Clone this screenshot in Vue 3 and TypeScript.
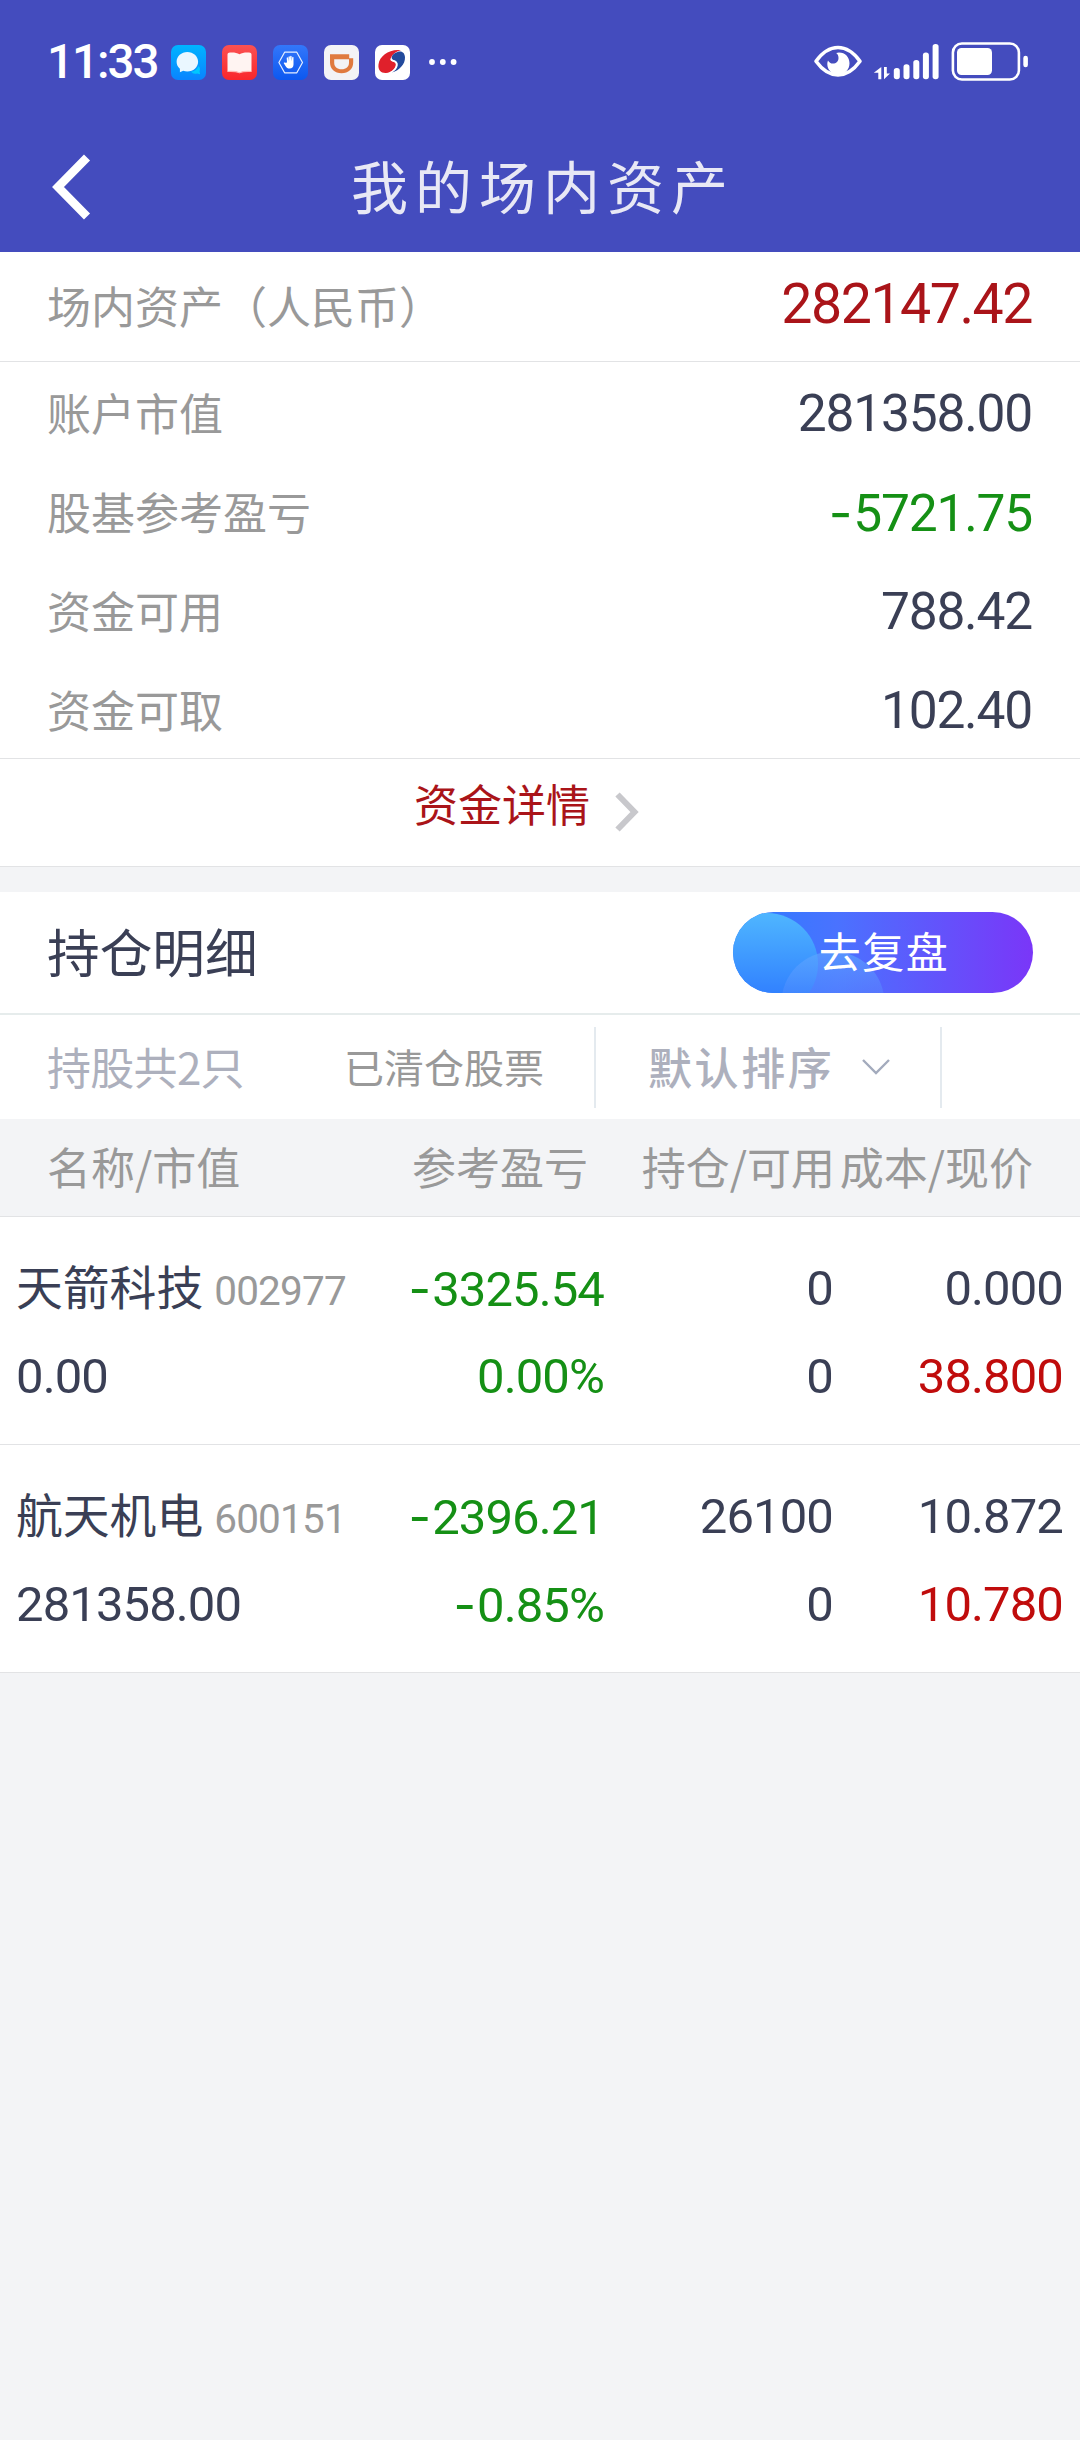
<script setup lang="ts">
interface SummaryRow {
  label: string
  sign?: string
  value: string
  tone?: string
}

interface Holding {
  name: string
  code: string
  marketValue: string
  sign: string
  profit: string
  rateSign: string
  rate: string
  position: string
  available: string
  cost: string
  price: string
}

const summary: SummaryRow[] = [
  { label: '账户市值', value: '281358.00' },
  { label: '股基参考盈亏', sign: '-', value: '5721.75', tone: 'green' },
  { label: '资金可用', value: '788.42' },
  { label: '资金可取', value: '102.40' },
]

const columns: string[] = ['名称/市值', '参考盈亏', '持仓/可用', '成本/现价']

const holdings: Holding[] = [
  {
    name: '天箭科技', code: '002977', marketValue: '0.00',
    sign: '-', profit: '3325.54', rateSign: '', rate: '0.00',
    position: '0', available: '0', cost: '0.000', price: '38.800',
  },
  {
    name: '航天机电', code: '600151', marketValue: '281358.00',
    sign: '-', profit: '2396.21', rateSign: '-', rate: '0.85',
    position: '26100', available: '0', cost: '10.872', price: '10.780',
  },
]
</script>

<template>
  <div class="page">
    <header class="top">
      <div class="status">
        <span class="time">11:33</span>
        <div class="apps">
          <svg width="35" height="35" viewBox="0 0 35 35">
            <defs>
              <linearGradient id="msgBg" x1="0" y1="0" x2="0" y2="1">
                <stop offset="0" stop-color="#00b4ff" /><stop offset="1" stop-color="#0a84ff" />
              </linearGradient>
            </defs>
            <rect width="35" height="35" rx="7" fill="url(#msgBg)" />
            <path d="M20 26.500c3.500 0 6-2 7.500-5.500 1.600 1.800 1.800 3.500 1 5.300l.6 2.900-3-.8c-2.300.8-4.600.2-6.100-1.900z" fill="#00c8ff" />
            <path d="M16.300 7C10.400 7 5.600 11.300 5.600 16.800c0 2.900 1.200 5.200 3.300 7v3.400l3.300-1.400c1.300.5 2.700.8 4.100.8 6 0 10.800-4.300 10.800-9.800S22.300 7 16.300 7z" fill="#eaf7ff" />
          </svg>
          <svg width="35" height="35" viewBox="0 0 35 35">
            <defs>
              <linearGradient id="bookBg" x1="0" y1="0" x2="0" y2="1">
                <stop offset="0" stop-color="#fb5152" /><stop offset="1" stop-color="#f9262b" />
              </linearGradient>
            </defs>
            <rect width="35" height="35" rx="7" fill="url(#bookBg)" />
            <path d="M5.500 9.500c0-1.300 1-2 2.500-2 3.500-.2 7 0 9.500 1.800C20 7.500 23.500 7.300 27 7.500c1.500 0 2.500.7 2.500 2V26.500c-4.500-.3-8.500-.2-12 1.200-3.500-1.400-7.500-1.500-12-1.200z" fill="#fff4f2" />
            <path d="M5.500 26.500c4.500-.3 8.500-.2 12 1.300 3.500-1.500 7.500-1.600 12-1.300" fill="none" stroke="#ffb9b4" stroke-width="1.200" />
          </svg>
          <svg width="35" height="35" viewBox="0 0 35 35">
            <defs>
              <linearGradient id="handBg" x1="0" y1="0" x2="0" y2="1">
                <stop offset="0" stop-color="#3377fa" /><stop offset="1" stop-color="#0c58f0" />
              </linearGradient>
            </defs>
            <rect width="35" height="35" rx="7" fill="url(#handBg)" />
            <path d="M11.600 7.200h12.200l5.700 10.300-5.700 10.300H11.600L5.900 17.500z" fill="none" stroke="#e6efff" stroke-width="1.200" stroke-linejoin="round" />
            <path d="M14 17.500l-.3-4.500c.1-.9 1.100-.9 1.300 0l.5 3.500V11.900c.1-.9 1.300-.9 1.400 0v4.300l.3-4.900c.1-.9 1.300-.9 1.400 0l.1 4.900.5-3.800c.1-.8 1.300-.8 1.300 0v7.100c0 2.500-1.500 4-3.800 4-2 0-3-.8-4.200-2.600l-1.700-2.600c-.3-.8.7-1.200 1.300-.6z" fill="#fff" />
          </svg>
          <svg width="35" height="35" viewBox="0 0 35 35">
            <rect width="35" height="35" rx="7" fill="#f3f3f6" />
            <path d="M6 9.200h19.200v4.100h4v4.200c0 6.500-4.800 10.700-11.600 10.700S6 24 6 17.500zM10.200 14.300v3.400c0 4 2.800 6.500 7.400 6.500s7.400-2.500 7.400-6.500v-3.400z" fill="#e07a3f" fill-rule="evenodd" />
          </svg>
          <svg width="35" height="35" viewBox="0 0 35 35">
            <rect width="35" height="35" rx="7" fill="#fff" />
            <path d="M26 5.200C15 3.500 4.500 10.500 3.500 19.500 2.800 25 6 28.300 11 28c5.500-.5 9.800-4 10-8 .1-2.200-1.300-3.300-3.500-3.700-1.700-.3-2.200-1.300-1.800-2.600C16.800 10 20.500 6.500 26 5.200z" fill="#e0202b" />
            <path d="M17 27.500C24.500 25.500 30.300 19 30 12.300 29.800 8 27 5.500 22.500 7c-3.600 1.200-5.500 3.300-5.800 5.400-.2 1.500.6 2.200 2 2.600 3 .8 4.400 2.700 4 5.400-.4 2.700-2.500 5.300-5.700 7.100z" fill="#234a9c" />
            <path d="M16.300 13.500c-.2 1.300.5 2.100 2 2.500 2.400.6 3.500 2 3.200 4-.4 3-2.700 5.700-6 7.500" fill="none" stroke="#fff" stroke-width="1.400" />
          </svg>
        </div>
        <svg class="dots" width="28" height="6" viewBox="0 0 28 6" fill="#fff">
          <circle cx="3" cy="3" r="2.900" /><circle cx="13.800" cy="3" r="2.900" /><circle cx="24.600" cy="3" r="2.900" />
        </svg>
        <svg class="sys" width="216" height="42" viewBox="813 40 216 42" fill="#fff">
          <path d="M816 60.300C823 50.500 829.500 46.500 838 46.500s15 4 22 13.800C853 70 846.500 74 838 74s-15-4-22-13.700z" fill="none" stroke="#fff" stroke-width="3.600" stroke-linejoin="round" />
          <path d="M839 51.500c6.200 0 10.500 4.600 10.500 10.700 0 6.200-4.600 11.300-11 11.300S827.300 69 827.300 63c0-1.300.2-2.500.7-3.600 1 2 2.800 3.200 4.900 3.200 3.300 0 5.600-2.500 5.600-5.600 0-2.100-.8-4-2.300-5z" />
          <path d="M881.300 66v12.200h-3V71.700h-4.500zM884 66v12.200l6-5.800h-3.200V66z" />
          <rect x="893.800" y="67" width="6" height="11.300" rx="2.800" />
          <rect x="903.500" y="63.300" width="6" height="15" rx="2.800" />
          <rect x="913.300" y="59" width="6" height="19.300" rx="2.800" />
          <rect x="922.900" y="51.600" width="6" height="26.700" rx="2.800" />
          <rect x="932.600" y="43" width="6" height="35.300" rx="2.800" />
          <rect x="952.900" y="42.500" width="66" height="36" rx="9" fill="none" stroke="#fff" stroke-width="2.600" />
          <rect x="957" y="47" width="35" height="27" rx="4.500" />
          <rect x="1023.300" y="54.700" width="4.600" height="11.600" rx="2.300" />
        </svg>
      </div>
      <div class="nav">
        <svg class="back" width="42" height="68" viewBox="0 0 42 68">
          <path d="M38 4.500L9 34l29 29.500" fill="none" stroke="#fff" stroke-width="8.500" />
        </svg>
        <h1>我的场内资产</h1>
      </div>
    </header>

    <section class="panel">
      <div class="total">
        <span class="label">场内资产（人民币）</span>
        <span class="num">282147.42</span>
      </div>
      <div class="rows">
        <div v-for="row in summary" :key="row.label" class="row">
          <span class="label">{{ row.label }}</span>
          <span class="num" :class="row.tone"><span v-if="row.sign" class="sign">{{ row.sign }}</span>{{ row.value }}</span>
        </div>
      </div>
      <div class="detail">
        <span>资金详情</span>
        <svg width="26" height="42" viewBox="0 0 26 42">
          <path d="M3.500 3.500L20.500 21 3.500 38.500" fill="none" stroke="#c8c8cc" stroke-width="6" />
        </svg>
      </div>
    </section>

    <section class="panel holdings">
      <div class="head">
        <h2>持仓明细</h2>
        <button class="review" type="button">
          <svg class="bubbles" width="300" height="81" viewBox="0 0 300 81">
            <defs>
              <linearGradient id="bubbleA" x1="0" y1="0" x2="0" y2="1">
                <stop offset="0" stop-color="#4fb6ff" /><stop offset="0.850" stop-color="#2f7dff" />
              </linearGradient>
              <linearGradient id="bubbleB" x1="0" y1="0" x2="0" y2="1">
                <stop offset="0" stop-color="#5fa8ff" stop-opacity="0.650" /><stop offset="0.500" stop-color="#5a8cff" stop-opacity="0.300" />
              </linearGradient>
            </defs>
            <circle cx="34" cy="52" r="51" fill="url(#bubbleA)" />
            <circle cx="100" cy="91" r="51.500" fill="url(#bubbleB)" />
          </svg>
          <span>去复盘</span>
        </button>
      </div>
      <div class="filters">
        <span class="count">持股共2只</span>
        <span class="cleared">已清仓股票</span>
        <div class="sort">
          <span>默认排序</span>
          <svg width="28" height="16" viewBox="0 0 28 16">
            <path d="M1 1l13 13L27 1" fill="none" stroke="#a3abbd" stroke-width="2.400" />
          </svg>
        </div>
      </div>
      <div class="thead">
        <span v-for="c in columns" :key="c">{{ c }}</span>
      </div>
      <div v-for="h in holdings" :key="h.code" class="stock">
        <div class="cell name"><b>{{ h.name }}</b><i>{{ h.code }}</i></div>
        <div class="cell green"><span class="sign">{{ h.sign }}</span>{{ h.profit }}</div>
        <div class="cell">{{ h.position }}</div>
        <div class="cell">{{ h.cost }}</div>
        <div class="cell">{{ h.marketValue }}</div>
        <div class="cell green"><span v-if="h.rateSign" class="sign">{{ h.rateSign }}</span>{{ h.rate }}%</div>
        <div class="cell">{{ h.available }}</div>
        <div class="cell red">{{ h.price }}</div>
      </div>
    </section>
  </div>
</template>

<style>
body {
  margin: 0;
  background: #f3f4f6;
}
</style>

<style scoped>
.page {
  width: 1080px;
  min-height: 2440px;
  background: #f3f4f6;
  color: #3a3f55;
  font-family: "Noto Sans CJK SC", sans-serif;
}

.top {
  height: 252px;
  background: #444cbe;
}

.status {
  display: flex;
  align-items: center;
  box-sizing: border-box;
  height: 124px;
  padding-left: 47px;
}

.time {
  width: 124px;
  color: #fff;
  font: 500 47.500px/60px Roboto, sans-serif;
  letter-spacing: -2px;
}

.apps {
  display: flex;
  gap: 16px;
}

.dots {
  margin-left: 19px;
}

.sys {
  margin: 0 51px 0 auto;
}

.nav {
  display: flex;
  align-items: center;
  box-sizing: border-box;
  height: 128px;
  padding: 0 0 3px 49px;
}

h1 {
  margin: 0 0 6px 260px;
  color: #e8e8f5;
  font-size: 57px;
  font-weight: 400;
  line-height: 80px;
  letter-spacing: 7px;
}

.panel {
  background: #fff;
}

.total,
.row {
  display: flex;
  align-items: center;
  justify-content: space-between;
  box-sizing: border-box;
  padding: 0 48px 0 47px;
}

.total {
  height: 110px;
  padding-bottom: 4px;
  border-bottom: 1px solid #e2e3e5;
}

.row {
  height: 99px;
}

.rows {
  border-bottom: 1px solid #e2e3e5;
}

.label {
  color: #999;
  font-size: 44px;
  line-height: 60px;
}

.num {
  font: 400 51.500px/60px Roboto, sans-serif;
  letter-spacing: -1.200px;
}

.row .num {
  padding-top: 4px;
}

.total .num {
  padding-top: 1px;
  color: #aa1419;
  font-size: 55.500px;
  letter-spacing: -1.500px;
}

.sign {
  margin-right: 2px;
  font-family: Inter, sans-serif;
}

.green {
  color: #159015;
}

.red {
  color: #c00c0c;
}

.detail {
  display: flex;
  align-items: center;
  box-sizing: border-box;
  height: 108px;
  padding: 0 0 20px 414px;
  border-bottom: 1px solid #e2e3e5;
  color: #aa1419;
  font-size: 44px;
  line-height: 60px;
}

.detail svg {
  margin: 19px 0 0 24px;
}

.holdings {
  margin-top: 25px;
}

.head {
  display: flex;
  align-items: center;
  justify-content: space-between;
  box-sizing: border-box;
  height: 123px;
  padding: 0 47px;
  border-bottom: 2px solid #e6ecec;
}

h2 {
  margin: 0 0 6px;
  font-size: 52.700px;
  font-weight: 400;
  line-height: 70px;
}

.review {
  position: relative;
  overflow: hidden;
  width: 300px;
  height: 81px;
  padding: 0 0 6px 2px;
  border: 0;
  border-radius: 41px;
  background: linear-gradient(90deg, #2b7dff 0%, #4a72ff 35%, #7a36f8 100%);
  color: #fff;
  font: 400 42px/60px "Noto Sans CJK SC", sans-serif;
  letter-spacing: 1.5px;
}

.review span {
  position: relative;
}

.bubbles {
  position: absolute;
  top: 0;
  left: 0;
}

.filters {
  display: flex;
  align-items: center;
  height: 104px;
  padding-left: 47px;
  font-size: 44px;
  line-height: 60px;
}

.count {
  width: 297px;
  padding-bottom: 3px;
  color: #adb0bd;
  letter-spacing: -0.700px;
}

.cleared {
  width: 250px;
  padding-bottom: 3px;
  color: #999;
  font-size: 40px;
}

.sort {
  display: flex;
  align-items: center;
  box-sizing: border-box;
  width: 348px;
  height: 81px;
  padding-left: 52px;
  border: solid #e4eaef;
  border-width: 0 2px;
  color: #adb0bd;
  font-weight: 500;
  letter-spacing: 2.600px;
}

.sort span {
  padding-bottom: 3px;
}

.sort svg {
  margin-left: 28px;
}

.thead {
  display: grid;
  grid-template-columns: 353px 188px 247px 198px;
  align-items: center;
  box-sizing: border-box;
  height: 98px;
  padding: 0 0 4px 47px;
  border-bottom: 1px solid #e2e3e5;
  background: #f3f4f6;
  color: #999;
  font-size: 44px;
  line-height: 60px;
  text-align: right;
  white-space: nowrap;
}

.thead span:first-child {
  text-align: left;
}

.stock {
  display: grid;
  grid-template-columns: 383px 205px 229px 230px;
  grid-template-rows: 88px 88px;
  box-sizing: border-box;
  height: 228px;
  padding: 27px 0 0 16px;
  border-bottom: 1px solid #e2e3e5;
}

.cell {
  padding-top: 1px;
  font: 400 49px/88px Roboto, sans-serif;
  letter-spacing: -0.900px;
  text-align: right;
  white-space: nowrap;
}

.cell:nth-child(4n + 1) {
  text-align: left;
}

.name {
  display: flex;
  align-items: baseline;
}

.name b {
  font: 400 46.800px/80px "Noto Sans CJK SC", sans-serif;
  letter-spacing: 0;
}

.name i {
  margin-left: 11px;
  color: #999;
  font: 400 40.500px/80px Roboto, sans-serif;
  letter-spacing: -0.800px;
}
</style>
